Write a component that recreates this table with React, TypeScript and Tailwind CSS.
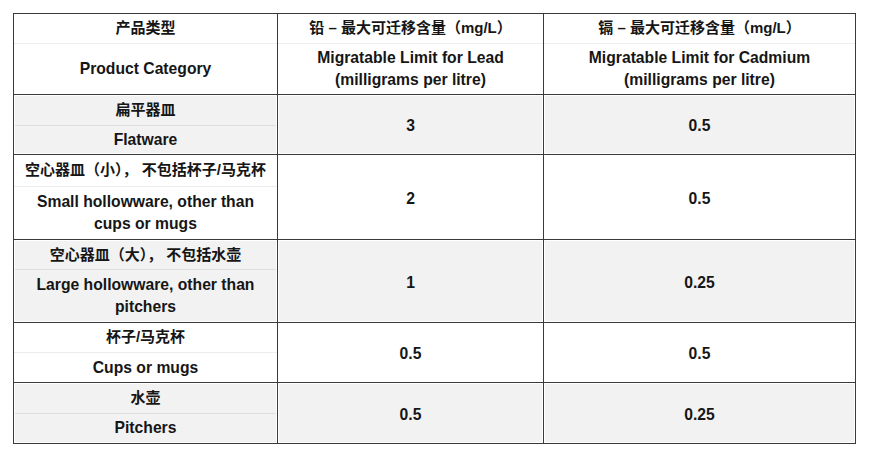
import React from "react";

type Row = {
  cn: string;
  en: string[];
  lead: string;
  cd: string;
  gray: boolean;
  cnH: string;
  enH: string;
  last?: boolean;
};

const rows: Row[] = [
  { cn: "扁平器皿", en: ["Flatware"], lead: "3", cd: "0.5", gray: true, cnH: "h-[29px]", enH: "h-[27px]" },
  { cn: "空心器皿（小）， 不包括杯子/马克杯", en: ["Small hollowware, other than", "cups or mugs"], lead: "2", cd: "0.5", gray: false, cnH: "h-[31px]", enH: "h-[52px]" },
  { cn: "空心器皿（大）， 不包括水壶", en: ["Large hollowware, other than", "pitchers"], lead: "1", cd: "0.25", gray: true, cnH: "h-[28px]", enH: "h-[51px]" },
  { cn: "杯子/马克杯", en: ["Cups or mugs"], lead: "0.5", cd: "0.5", gray: false, cnH: "h-[29px]", enH: "h-[29px]" },
  { cn: "水壶", en: ["Pitchers"], lead: "0.5", cd: "0.25", gray: true, cnH: "h-[29px]", enH: "h-[28px]", last: true },
];

function Inner({ gray, children, className = "" }: { gray: boolean; children: React.ReactNode; className?: string }) {
  return (
    <div className={`h-full ${gray ? "p-px bg-white" : "bg-white"}`}>
      <div className={`h-full ${gray ? "bg-[#f2f2f2]" : "bg-white"} ${className}`}>{children}</div>
    </div>
  );
}

export default function App() {
  return (
    <div
      className="min-h-[457px] w-[869px] bg-white pl-[13px] pt-[13px] text-[15px] font-bold text-[#161616]"
      style={{ fontFamily: '"Liberation Sans", "Noto Sans CJK SC", sans-serif' }}
    >
      <div className="w-[843px] border border-[#3a3a3a]">
        {/* Header */}
        <div className="grid grid-cols-[264px_266px_311px] border-b border-[#3a3a3a]">
          {[
            ["产品类型", ["Product Category"]],
            ["铅 – 最大可迁移含量（mg/L）", ["Migratable Limit for Lead", "(milligrams per litre)"]],
            ["镉 – 最大可迁移含量（mg/L）", ["Migratable Limit for Cadmium", "(milligrams per litre)"]],
          ].map(([cn, en], i) => (
            <div key={i} className={`flex flex-col ${i < 2 ? "border-r border-[#3a3a3a]" : ""}`}>
              <div className="flex h-[29px] items-center justify-center">{cn as string}</div>
              <div className="h-px bg-[#ededed]" />
              <div className="flex h-[50px] flex-col items-center justify-center text-[15.7px] leading-[22px]">
                {(en as string[]).map((l) => (
                  <div key={l}>{l}</div>
                ))}
              </div>
            </div>
          ))}
        </div>
        {rows.map((r) => (
          <div
            key={r.cn}
            className={`grid grid-cols-[264px_266px_311px] ${r.last ? "" : "border-b border-[#3a3a3a]"}`}
          >
            <div className="border-r border-[#3a3a3a]">
              <Inner gray={r.gray} className="flex flex-col">
                <div className={`flex ${r.cnH} items-center justify-center`}>{r.cn}</div>
                <div className={`h-px ${r.gray ? "bg-[#dedede]" : "bg-[#ededed]"}`} />
                <div className={`flex ${r.enH} flex-col items-center justify-center text-[15.7px] leading-[22px]`}>
                  {r.en.map((l) => (
                    <div key={l}>{l}</div>
                  ))}
                </div>
              </Inner>
            </div>
            <div className="border-r border-[#3a3a3a]">
              <Inner gray={r.gray} className="flex items-center justify-center pt-[3px] text-[15.7px]">
                {r.lead}
              </Inner>
            </div>
            <div>
              <Inner gray={r.gray} className="flex items-center justify-center pt-[3px] text-[15.7px]">
                {r.cd}
              </Inner>
            </div>
          </div>
        ))}
      </div>
    </div>
  );
}
